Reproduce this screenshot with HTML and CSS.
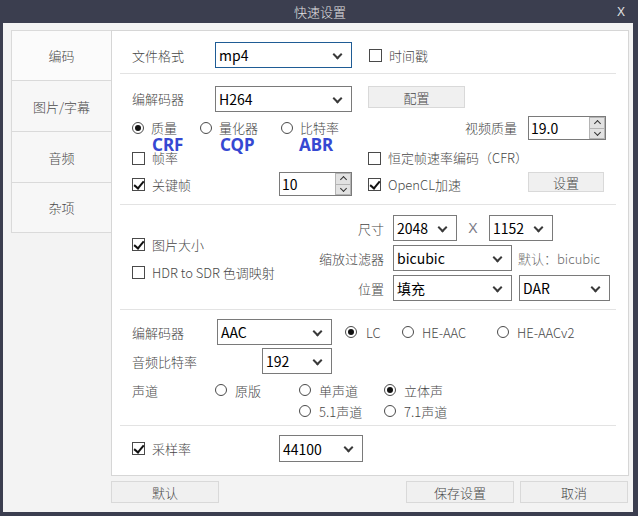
FILE: index.html
```html
<!DOCTYPE html>
<html lang="zh-CN">
<head>
<meta charset="utf-8">
<title>快速设置</title>
<link rel="stylesheet" href="styles.css">
</head>
<body>
<div class="window">
  <div class="titlebar"><span></span><span class="title">快速设置</span><span class="close">X</span></div>
  <div class="content">
    <div class="main">
      <div class="tabs">
        <div class="tab active">编码</div>
        <div class="tab">图片/字幕</div>
        <div class="tab">音频</div>
        <div class="tab last">杂项</div>
      </div>
      <div class="panel">
        <section class="sec s1">
          <div class="row h26">
            <span class="lbl w83">文件格式</span>
            <div class="sel focus w137"><span>mp4</span></div>
            <label class="chk ml17"><i class="box"></i>时间戳</label>
          </div>
        </section>

        <section class="sec s2">
          <div class="row h26 top">
            <span class="lbl w83 lh26">编解码器</span>
            <div class="sel w137"><span>H264</span></div>
            <button class="btn cfg">配置</button>
          </div>
          <div class="row rowB">
            <label class="rad w68"><i class="dot on"></i>质量</label>
            <label class="rad w81"><i class="dot"></i>量化器</label>
            <label class="rad w184"><i class="dot"></i>比特率</label>
            <span class="lbl w52">视频质量</span>
            <div class="spin w78 ml11"><span>19.0</span><div class="arrows"><b class="up"></b><b class="down"></b></div></div>
          </div>
          <div class="row rowC">
            <span class="mode w68">CRF</span>
            <span class="mode w79">CQP</span>
            <span class="mode">ABR</span>
          </div>
          <div class="row rowD">
            <label class="chk w236"><i class="box"></i>帧率</label>
            <label class="chk"><i class="box"></i>恒定帧速率编码（CFR）</label>
          </div>
          <div class="row rowE">
            <label class="chk w147"><i class="box on"></i>关键帧</label>
            <div class="spin w73"><span>10</span><div class="arrows"><b class="up"></b><b class="down"></b></div></div>
            <label class="chk ml16 w160"><i class="box on"></i>OpenCL加速</label>
            <button class="btn set">设置</button>
          </div>
        </section>

        <section class="sec s3">
          <div class="s3left">
            <label class="chk"><i class="box on"></i>图片大小</label>
            <label class="chk"><i class="box"></i>HDR to SDR 色调映射</label>
          </div>
          <div class="s3grid">
            <span class="rlbl">尺寸</span>
            <div class="ctrls">
              <div class="sel w64"><span>2048</span></div>
              <span class="times">X</span>
              <div class="sel w64"><span>1152</span></div>
            </div>
            <span class="rlbl">缩放过滤器</span>
            <div class="ctrls">
              <div class="sel w119"><span>bicubic</span></div>
              <span class="hint">默认：bicubic</span>
            </div>
            <span class="rlbl">位置</span>
            <div class="ctrls">
              <div class="sel w119"><span>填充</span></div>
              <div class="sel w91 ml7"><span>DAR</span></div>
            </div>
          </div>
        </section>

        <section class="sec s4">
          <div class="row h26">
            <span class="lbl w85">编解码器</span>
            <div class="sel w115"><span>AAC</span></div>
            <label class="rad w57 ml13 g9"><i class="dot on"></i>LC</label>
            <label class="rad w95"><i class="dot"></i>HE-AAC</label>
            <label class="rad"><i class="dot"></i>HE-AACv2</label>
          </div>
          <div class="row h26 mt3">
            <span class="lbl w130">音频比特率</span>
            <div class="sel w70"><span>192</span></div>
          </div>
          <div class="row h20 mt6">
            <span class="lbl w83">声道</span>
            <label class="rad w84"><i class="dot"></i>原版</label>
            <label class="rad w85"><i class="dot"></i>单声道</label>
            <label class="rad"><i class="dot on"></i>立体声</label>
          </div>
          <div class="row h20 mt1 pl167">
            <label class="rad w85"><i class="dot"></i>5.1声道</label>
            <label class="rad"><i class="dot"></i>7.1声道</label>
          </div>
        </section>

        <section class="sec s5">
          <div class="row h27">
            <label class="chk w147"><i class="box on"></i>采样率</label>
            <div class="sel w84"><span>44100</span></div>
          </div>
        </section>
      </div>
    </div>
    <div class="footer">
      <button class="btn fbtn">默认</button>
      <span class="spacer"></span>
      <button class="btn fbtn">保存设置</button>
      <button class="btn fbtn">取消</button>
    </div>
  </div>
</div>
</body>
</html>
```

FILE: styles.css
```css
* { box-sizing: border-box; margin: 0; padding: 0; }
body {
  margin: 0;
  background: #3b3e4f;
  font-family: "Noto Sans CJK SC", "Noto Sans", sans-serif;
  font-size: 13px;
  font-weight: 300;
  color: #474747;
}
.window {
  width: 638px;
  height: 516px;
  background: #3b3e4f;
  padding: 0 5px 4px 3px;
  display: flex;
  flex-direction: column;
}
.titlebar {
  height: 23px;
  display: grid;
  grid-template-columns: 1fr auto 1fr;
  align-items: center;
  color: #e2e2e2;
}
.title { font-size: 13px; line-height: 23px; padding-left: 4px; }
.close {
  justify-self: end;
  margin-right: 8px;
  font-family: "Liberation Sans", sans-serif;
  font-size: 12px;
}
.content {
  flex: 1;
  background: #f3f3f3;
  padding: 7px 4px 0 8px;
  display: flex;
  flex-direction: column;
}
.main { display: flex; height: 446px; }
.tabs { width: 100px; display: flex; flex-direction: column; }
.tab {
  height: 51px;
  border-left: 1px solid #dadada;
  border-bottom: 1px solid #dadada;
  background: #f7f7f7;
  display: flex;
  align-items: center;
  justify-content: center;
  color: #4a4a4a;
}
.tab.active { border-top: 1px solid #dadada; background: #fbfbfb; }
.tab.last { height: 50px; }
.panel {
  width: 518px;
  height: 446px;
  border: 1px solid #d6d6d6;
  background: #fff;
}
.sec {
  margin: 0 12px 0 8px;
  padding-left: 12px;
  border-bottom: 1px solid #e3e3e3;
}
.s1 { padding-top: 11px; padding-bottom: 5px; }
.s2 { padding-top: 12px; padding-bottom: 8px; }
.s3 { padding-top: 10px; padding-bottom: 8px; display: flex; }
.s4 { padding-top: 9px; padding-bottom: 4px; }
.s5 { padding-top: 9px; border-bottom: none; }

.row { display: flex; align-items: center; }
.row.top { align-items: flex-start; }
.h26 { height: 26px; }
.h27 { height: 27px; }
.h20 { height: 20px; }
.rowB { height: 20px; margin-top: 6px; line-height: 16px; }
.rowC { height: 13px; padding-left: 20px; }
.rowD { height: 14px; line-height: 14px; }
.rowE { height: 24px; margin-top: 7px; }
.mt1 { margin-top: 1px; }
.mt3 { margin-top: 3px; }
.mt6 { margin-top: 6px; }
.pl167 { padding-left: 167px; }

.w52 { width: 52px; flex: none; }
.w57 { width: 57px; flex: none; }
.w64 { width: 64px; flex: none; }
.w68 { width: 68px; flex: none; }
.w70 { width: 70px; flex: none; }
.w73 { width: 73px; flex: none; }
.w78 { width: 78px; flex: none; }
.w79 { width: 79px; flex: none; }
.w81 { width: 81px; flex: none; }
.w83 { width: 83px; flex: none; }
.w84 { width: 84px; flex: none; }
.w85 { width: 85px; flex: none; }
.w91 { width: 91px; flex: none; }
.w95 { width: 95px; flex: none; }
.w115 { width: 115px; flex: none; }
.w119 { width: 119px; flex: none; }
.w130 { width: 130px; flex: none; }
.w137 { width: 137px; flex: none; }
.w147 { width: 147px; flex: none; }
.w160 { width: 160px; flex: none; }
.w184 { width: 184px; flex: none; }
.w236 { width: 236px; flex: none; }
.ml7 { margin-left: 7px; }
.ml11 { margin-left: 11px; }
.ml13 { margin-left: 13px; }
.ml16 { margin-left: 16px; }
.ml17 { margin-left: 17px; }
.lh26 { line-height: 26px; }

.lbl { white-space: nowrap; }

/* select */
.sel {
  position: relative;
  height: 26px;
  border: 1px solid #7a7a7a;
  background: #fff;
  display: flex;
  align-items: center;
  padding-left: 3px;
  font-size: 14px;
  font-weight: 400;
  color: #000;
}
.h27 .sel { height: 27px; }
.sel.focus { border-color: #1f5c95; }
.sel::after {
  content: "";
  position: absolute;
  right: 10px;
  top: 8px;
  width: 5px;
  height: 5px;
  border-right: 2px solid #3a3a3a;
  border-bottom: 2px solid #3a3a3a;
  transform: rotate(45deg);
}

/* spin box */
.spin {
  height: 24px;
  border: 1px solid #7a7a7a;
  background: #fff;
  display: flex;
  align-items: center;
  padding-left: 2px;
  font-size: 14px;
  font-weight: 400;
  color: #000;
}
.spin span { flex: 1; }
.arrows {
  width: 16px;
  height: 22px;
  display: flex;
  flex-direction: column;
}
.arrows b {
  flex: 1;
  background: #e2e2e2;
  border: 1px solid #b4b4b4;
  display: flex;
  align-items: center;
  justify-content: center;
}
.arrows b::after {
  content: "";
  width: 4px;
  height: 4px;
  border-left: 1.5px solid #333;
  border-top: 1.5px solid #333;
}
.arrows .up::after { transform: translateY(1px) rotate(45deg); }
.arrows .down::after { transform: translateY(-1px) rotate(225deg); }
.arrows .down { border-top: none; }

/* checkbox */
.chk {
  display: flex;
  align-items: center;
  gap: 7px;
  white-space: nowrap;
}
.box {
  width: 13px;
  height: 13px;
  border: 1px solid #4a4a4a;
  background: #fff;
  flex: none;
  position: relative;
}
.box.on::after {
  content: "";
  position: absolute;
  left: 3px;
  top: 0px;
  width: 4px;
  height: 8px;
  border-right: 2.2px solid #111;
  border-bottom: 2.2px solid #111;
  transform: rotate(40deg);
}

/* radio */
.rad {
  display: flex;
  align-items: center;
  gap: 8px;
  white-space: nowrap;
}
.rad.g9 { gap: 9px; }
.rowB .rad { gap: 7px; }
.dot {
  width: 12px;
  height: 12px;
  border: 1px solid #4a4a4a;
  border-radius: 50%;
  background: #fff;
  flex: none;
  display: flex;
  align-items: center;
  justify-content: center;
}
.dot.on::after {
  content: "";
  width: 6px;
  height: 6px;
  border-radius: 50%;
  background: #111;
}

.mode {
  font-family: "Noto Sans", "Liberation Sans", sans-serif;
  font-weight: 700;
  font-size: 17px;
  line-height: 13px;
  color: #3648d2;
}

/* buttons */
.btn {
  font-family: inherit;
  font-size: 13px;
  font-weight: 300;
  color: #474747;
  background: #f0f0f0;
  border: 1px solid #d9d9d9;
}
.cfg { width: 97px; height: 22px; margin-left: 16px; }
.set { width: 76px; height: 20px; align-self: flex-start; }

/* section 3 */
.s3left {
  width: 182px;
  flex: none;
  display: flex;
  flex-direction: column;
  justify-content: center;
  gap: 14px;
}
.s3left .chk { height: 14px; }
.s3grid {
  display: grid;
  grid-template-columns: 70px auto;
  column-gap: 9px;
  row-gap: 4px;
  grid-auto-rows: 26px;
  align-items: center;
}
.rlbl { text-align: right; white-space: nowrap; }
.ctrls { display: flex; align-items: center; height: 26px; }
.times {
  width: 32px;
  text-align: center;
  color: #7b7b86;
  font-family: "Liberation Sans", sans-serif;
  font-size: 14px;
}
.hint { margin-left: 6px; color: #6a6a6a; white-space: nowrap; }

/* footer */
.footer {
  display: flex;
  margin-top: 5px;
  height: 22px;
  padding-left: 100px;
}
.fbtn { width: 108px; height: 22px; }
.fbtn + .fbtn { margin-left: 6px; }
.spacer { flex: 1; }
.footer .fbtn:last-child { margin-right: 1px; }
```
